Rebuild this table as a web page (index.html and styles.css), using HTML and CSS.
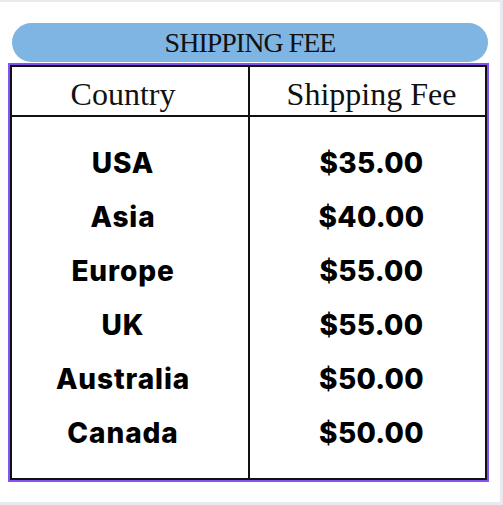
FILE: index.html
```html
<!DOCTYPE html>
<html>
<head>
<meta charset="utf-8">
<link rel="stylesheet" href="styles.css">
</head>
<body>
<div class="card">
  <div class="pill">SHIPPING FEE</div>
  <div class="frame">
    <div class="table">
      <div class="col col-left">
        <div class="head">Country</div>
        <div class="body">
          <div class="row">USA</div>
          <div class="row">Asia</div>
          <div class="row">Europe</div>
          <div class="row">UK</div>
          <div class="row">Australia</div>
          <div class="row">Canada</div>
        </div>
      </div>
      <div class="col col-right">
        <div class="head">Shipping Fee</div>
        <div class="body">
          <div class="row">$35.00</div>
          <div class="row">$40.00</div>
          <div class="row">$55.00</div>
          <div class="row">$55.00</div>
          <div class="row">$50.00</div>
          <div class="row">$50.00</div>
        </div>
      </div>
    </div>
  </div>
</div>
</body>
</html>
```

FILE: styles.css
```css
html, body {
  margin: 0;
  padding: 0;
}
body {
  background: #e9e9ef;
  padding-top: 2px;
  height: 503px;
  overflow: hidden;
}
.card {
  width: 500px;
  height: 500px;
  background: #ffffff;
  padding-top: 21px;
  box-sizing: border-box;
}
.pill {
  margin: 0 12px;
  width: 476px;
  height: 39px;
  line-height: 39px;
  border-radius: 20px;
  background: #7eb5e3;
  color: #111;
  text-align: center;
  font-family: "Liberation Serif", serif;
  font-size: 28px;
  letter-spacing: -1px;
}
.frame {
  margin: 1px 0 0 8px;
  width: 481px;
  border: 2px solid #8452f5;
  box-sizing: border-box;
}
.table {
  display: flex;
  border: 2px solid #111;
}
.col-left {
  width: 236px;
  border-right: 2px solid #111;
}
.col-right {
  flex: 1;
}
.head {
  height: 45px;
  padding-top: 3px;
  line-height: 48px;
  border-bottom: 2px solid #111;
  text-align: center;
  font-family: "Liberation Serif", serif;
  font-size: 32px;
  letter-spacing: 0;
  color: #111;
}
.body {
  padding: 19px 0 18px;
}
.row {
  height: 54px;
  line-height: 54px;
  text-align: center;
  font-family: Inter, sans-serif;
  font-weight: 800;
  font-size: 28px;
  color: #000;
}
.col-left .row {
  letter-spacing: 0.9px;
}
.col-right .row {
  letter-spacing: 0.3px;
}
.col-left .head,
.col-left .row {
  padding-right: 14px;
}
.col-right .head,
.col-right .row {
  padding-left: 8px;
}
```
